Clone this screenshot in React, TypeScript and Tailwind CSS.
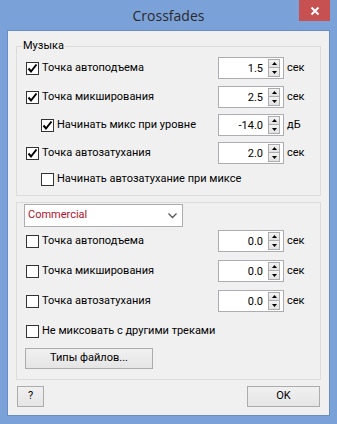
import React from "react";

const font = { fontFamily: 'Roboto, "Open Sans", sans-serif' };

function Check({ checked }: { checked?: boolean }) {
  return (
    <div className="w-[13px] h-[13px] shrink-0 border border-[#333333] bg-white flex items-center justify-center">
      {checked && (
        <svg width="11" height="11" viewBox="0 0 11 11">
          <path d="M1.5 5.5 L4 8.5 L9.5 1.5" fill="none" stroke="#000" strokeWidth="2" />
        </svg>
      )}
    </div>
  );
}

function Spin({ value }: { value: string }) {
  return (
    <div className="w-[66px] h-[22px] shrink-0 border border-[#abadb3] bg-white flex items-center">
      <span className="flex-1 text-right pr-[5px] leading-none">{value}</span>
      <div className="w-[12px] h-[18px] mr-[3px] flex flex-col">
        <div className="h-[9px] border border-[#acacac] bg-gradient-to-b from-[#f2f2f2] to-[#e2e2e2] flex items-center justify-center">
          <svg width="5" height="3" viewBox="0 0 5 3">
            <path d="M0 3 L2.5 0 L5 3 Z" fill="#000" />
          </svg>
        </div>
        <div className="h-[9px] border border-t-0 border-[#acacac] bg-gradient-to-b from-[#f2f2f2] to-[#e2e2e2] flex items-center justify-center">
          <svg width="5" height="3" viewBox="0 0 5 3">
            <path d="M0 0 L2.5 3 L5 0 Z" fill="#000" />
          </svg>
        </div>
      </div>
    </div>
  );
}

function Row({
  label,
  checked,
  value,
  unit,
  indent,
  className = "",
}: {
  label: string;
  checked?: boolean;
  value?: string;
  unit?: string;
  indent?: boolean;
  className?: string;
}) {
  return (
    <div className={`h-[22px] flex items-center ${className}`}>
      <div className={`flex-1 flex items-center gap-[3px] ${indent ? "pl-[15px]" : ""}`}>
        <Check checked={checked} />
        <span className="whitespace-nowrap">{label}</span>
      </div>
      {value && (
        <>
          <Spin value={value} />
          <span className="w-[36px] pl-[3px]">{unit}</span>
        </>
      )}
    </div>
  );
}

function Button({ children, className = "" }: { children: React.ReactNode; className?: string }) {
  return (
    <div
      className={`h-[21px] flex items-center justify-center border border-[#acacac] bg-gradient-to-b from-[#f0f0f0] to-[#e5e5e5] ${className}`}
    >
      {children}
    </div>
  );
}

export default function App() {
  return (
    <div className="w-[337px] h-[424px] bg-[#7aa1d8] flex flex-col text-[11px] text-black" style={font}>
      <div className="h-[30px] relative flex items-center justify-center">
        <span className="text-[14px] text-[#2a2a2a]" style={{ fontFamily: '"Open Sans", sans-serif' }}>
          Crossfades
        </span>
        <div className="absolute top-0 right-[7px] w-[31px] h-[21px] bg-[#c75050] flex items-center justify-center">
          <svg width="10" height="10" viewBox="0 0 10 10">
            <path d="M1.5 1.5 L8.5 8.5 M8.5 1.5 L1.5 8.5" stroke="#fff" strokeWidth="2" />
          </svg>
        </div>
      </div>

      <div className="mx-[7px] h-[386px] border border-[#6a8dc8] bg-[#f0f0f0] px-[8px] pt-[15px] pb-[8px] flex flex-col">
        {/* Музыка */}
        <div className="relative h-[150px] border border-[#dcdcdc] pl-[9px] pt-[10px] flex flex-col">
          <span className="absolute -top-[9px] left-[5px] px-[1px] bg-[#f0f0f0] leading-[16px]">Музыка</span>
          <Row label="Точка автоподъема" checked value="1.5" unit="сек" />
          <Row label="Точка микширования" checked value="2.5" unit="сек" className="mt-[7px]" />
          <Row label="Начинать микс при уровне" checked indent value="-14.0" unit="дБ" className="mt-[6px]" />
          <Row label="Точка автозатухания" checked value="2.0" unit="сек" className="mt-[6px]" />
          <Row label="Начинать автозатухание при миксе" indent className="mt-[4px]" />
        </div>

        {/* Commercial */}
        <div className="mt-[6px] h-[178px] border border-[#dcdcdc] pl-[9px] pt-[1px] flex flex-col">
          <div className="ml-[-2px] w-[159px] h-[23px] border border-[#abadb3] bg-white flex items-center pl-[3px] pr-[5px]">
            <span className="flex-1 text-[#b0102a]">Commercial</span>
            <svg width="9" height="6" viewBox="0 0 9 6">
              <path d="M0.5 0.5 L4.5 4.5 L8.5 0.5" fill="none" stroke="#555" strokeWidth="1.3" />
            </svg>
          </div>
          <Row label="Точка автоподъема" value="0.0" unit="сек" className="mt-[3px]" />
          <Row label="Точка микширования" value="0.0" unit="сек" className="mt-[8px]" />
          <Row label="Точка автозатухания" value="0.0" unit="сек" className="mt-[8px]" />
          <Row label="Не миксовать с другими треками" className="mt-[8px]" />
          <Button className="mt-[6px] ml-[-1px] w-[128px]">Типы файлов...</Button>
        </div>

        <div className="mt-[6px] px-[1px] flex items-center justify-between">
          <Button className="w-[27px]">?</Button>
          <Button className="w-[73px] border-[#3c9be8]">OK</Button>
        </div>
      </div>
    </div>
  );
}
